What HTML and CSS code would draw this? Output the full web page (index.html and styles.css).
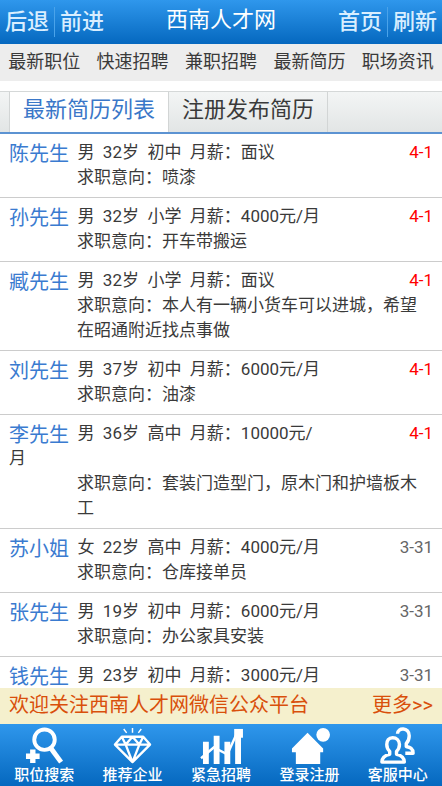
FILE: index.html
```html
<!DOCTYPE html>
<html lang="zh-CN">
<head>
<meta charset="utf-8">
<meta name="viewport" content="width=device-width, initial-scale=1">
<title>西南人才网</title>
<link rel="stylesheet" href="styles.css">
</head>
<body>
<header class="topbar">
  <div class="topbar-links"><a href="#">后退</a><a href="#">前进</a></div>
  <h1>西南人才网</h1>
  <div class="topbar-links topbar-right"><a href="#">首页</a><a href="#">刷新</a></div>
</header>
<nav class="nav">
  <a href="#">最新职位</a><a href="#">快速招聘</a><a href="#">兼职招聘</a><a href="#">最新简历</a><a href="#">职场资讯</a>
</nav>
<div class="tabs">
  <a class="tab tab-active" href="#">最新简历列表</a><a class="tab" href="#">注册发布简历</a>
</div>
<main class="list">
  <article class="item">
    <time class="date today">4-1</time>
    <p class="summary"><a class="name" href="#">陈先生</a>&nbsp; 男&nbsp; 32岁&nbsp; 初中&nbsp; 月薪：面议</p>
    <p class="intent">求职意向：喷漆</p>
  </article>
  <article class="item">
    <time class="date today">4-1</time>
    <p class="summary"><a class="name" href="#">孙先生</a>&nbsp; 男&nbsp; 32岁&nbsp; 小学&nbsp; 月薪：4000元/月</p>
    <p class="intent">求职意向：开车带搬运</p>
  </article>
  <article class="item">
    <time class="date today">4-1</time>
    <p class="summary"><a class="name" href="#">臧先生</a>&nbsp; 男&nbsp; 32岁&nbsp; 小学&nbsp; 月薪：面议</p>
    <p class="intent">求职意向：本人有一辆小货车可以进城，希望在昭通附近找点事做</p>
  </article>
  <article class="item">
    <time class="date today">4-1</time>
    <p class="summary"><a class="name" href="#">刘先生</a>&nbsp; 男&nbsp; 37岁&nbsp; 初中&nbsp; 月薪：6000元/月</p>
    <p class="intent">求职意向：油漆</p>
  </article>
  <article class="item">
    <time class="date today">4-1</time>
    <p class="summary"><a class="name" href="#">李先生</a>&nbsp; 男&nbsp; 36岁&nbsp; 高中&nbsp; 月薪：10000元/月</p>
    <p class="intent">求职意向：套装门造型门，原木门和护墙板木工</p>
  </article>
  <article class="item">
    <time class="date">3-31</time>
    <p class="summary"><a class="name" href="#">苏小姐</a>&nbsp; 女&nbsp; 22岁&nbsp; 高中&nbsp; 月薪：4000元/月</p>
    <p class="intent">求职意向：仓库接单员</p>
  </article>
  <article class="item">
    <time class="date">3-31</time>
    <p class="summary"><a class="name" href="#">张先生</a>&nbsp; 男&nbsp; 19岁&nbsp; 初中&nbsp; 月薪：6000元/月</p>
    <p class="intent">求职意向：办公家具安装</p>
  </article>
  <article class="item">
    <time class="date">3-31</time>
    <p class="summary"><a class="name" href="#">钱先生</a>&nbsp; 男&nbsp; 23岁&nbsp; 初中&nbsp; 月薪：3000元/月</p>
  </article>
</main>
<aside class="notice"><span>欢迎关注西南人才网微信公众平台</span><a href="#">更多&gt;&gt;</a></aside>
<nav class="dock">
  <a href="#">
    <svg viewBox="0 0 40 40" fill="none" stroke="#fff" aria-hidden="true"><circle cx="20" cy="13" r="10.5" stroke-width="4"/><path d="M26 21l11 15" stroke-width="5"/><path d="M8 23v14M1 30h14" stroke-width="5.5"/></svg>
    <span>职位搜索</span>
  </a>
  <a href="#">
    <svg viewBox="0 0 40 40" fill="none" stroke="#fff" stroke-width="2.4" stroke-linejoin="round" aria-hidden="true"><path d="M9 10h22l7 8-18 18L2 18zM2 18h36M9 10l4 8 7 18 7-18 4-8M13 18l7-8 7 8"/><path d="M20 1v5M11 2l3 4M29 2l-3 4" stroke-width="1.5"/></svg>
    <span>推荐企业</span>
  </a>
  <a href="#">
    <svg viewBox="0 0 40 40" fill="#fff" aria-hidden="true"><path d="M1 15h6v23H1zM12 9h6v29h-6zM23 15h6v23h-6zM34 8h6v30h-6z"/><path d="M-1 32l13-11 14 7L36 6" fill="none" stroke="#fff" stroke-width="2.5"/><path d="M33 2h9v9h-9z"/></svg>
    <span>紧急招聘</span>
  </a>
  <a href="#">
    <svg viewBox="0 0 40 40" fill="#fff" aria-hidden="true"><path d="M18 6L2 22v4h4v12h25V26h3v-4z"/><circle cx="34" cy="8" r="7"/></svg>
    <span>登录注册</span>
  </a>
  <a href="#">
    <svg viewBox="0 0 40 40" fill="none" stroke="#fff" stroke-width="3.5" stroke-linejoin="round" aria-hidden="true"><path d="M20 7c0-7 12-7 12 2 0 4-1 6-3 8v3c4 1 7 2 7 7H28"/><path d="M15 11c-4 0-6 3-6 7 0 3 1 5 3 7v3c-5 1-8 3-8 8h23c0-5-3-7-8-8v-3c2-2 3-4 3-7 0-4-3-7-7-7z"/></svg>
    <span>客服中心</span>
  </a>
</nav>
</body>
</html>
```

FILE: styles.css
```css
* { box-sizing: border-box; }

body {
  margin: 0;
  height: 100vh;
  display: flex;
  flex-direction: column;
  background: #fff;
  color: #3a3a3a;
  font: 17px/25px Roboto, "Noto Sans CJK SC", sans-serif;
}

a { color: inherit; text-decoration: none; }
p, h1 { margin: 0; }

.topbar {
  flex: none;
  display: flex;
  align-items: center;
  justify-content: space-between;
  height: 44px;
  background: linear-gradient(#2f97ec, #0568bf);
  color: #fff;
}
.topbar h1 { font-size: 22px; font-weight: 400; line-height: 40px; align-self: flex-start; }
.topbar-links { display: flex; color: #d9eeff; font-size: 22px; font-weight: 500; }
.topbar-links a { padding: 0 5px; line-height: 30px; }
.topbar-links a + a { border-left: 1px solid #4aa3ea; }

.nav {
  flex: none;
  display: flex;
  height: 37px;
  background: #ededed;
  font-size: 18px;
  line-height: 36px;
}
.nav a { flex: 1; text-align: center; white-space: nowrap; }

.tabs {
  flex: none;
  display: flex;
  height: 43px;
  margin-top: 10px;
  padding-left: 9px;
  border-top: 1px solid #d5d8d8;
  border-bottom: 2px solid #5c93d2;
  background: linear-gradient(#f3f5f5, #e2e5e5);
  font-size: 22px;
  line-height: 36px;
}
.tab { padding: 0 13px; border-right: 1px solid #d2d5d5; }
.tab-active { background: #fff; border-left: 1px solid #d2d5d5; color: #3a77c8; }

.list { flex: 1; min-height: 0; overflow: hidden; }
.item { padding: 6px 9px 7px; border-bottom: 1px solid #ccc; }
.summary { width: 75%; }
.name { color: #3a7bd0; font-size: 20px; line-height: 20px; vertical-align: middle; }
.intent { margin-left: 68px; }
.date { float: right; color: #666; }
.today { color: #f00; }

.notice {
  flex: none;
  display: flex;
  justify-content: space-between;
  height: 36px;
  padding: 0 9px;
  background: #f5f0cd;
  color: #d94f0b;
  font-size: 20px;
  line-height: 35px;
}

.dock {
  flex: none;
  display: flex;
  height: 62px;
  background: linear-gradient(#2f97ec, #0568bf);
  color: #fff;
  font-size: 15px;
  font-weight: 500;
  line-height: 18px;
}
.dock a { flex: 1; display: flex; flex-direction: column; align-items: center; padding-top: 3px; }
.dock svg { width: 39px; height: 39px; overflow: visible; }
```
